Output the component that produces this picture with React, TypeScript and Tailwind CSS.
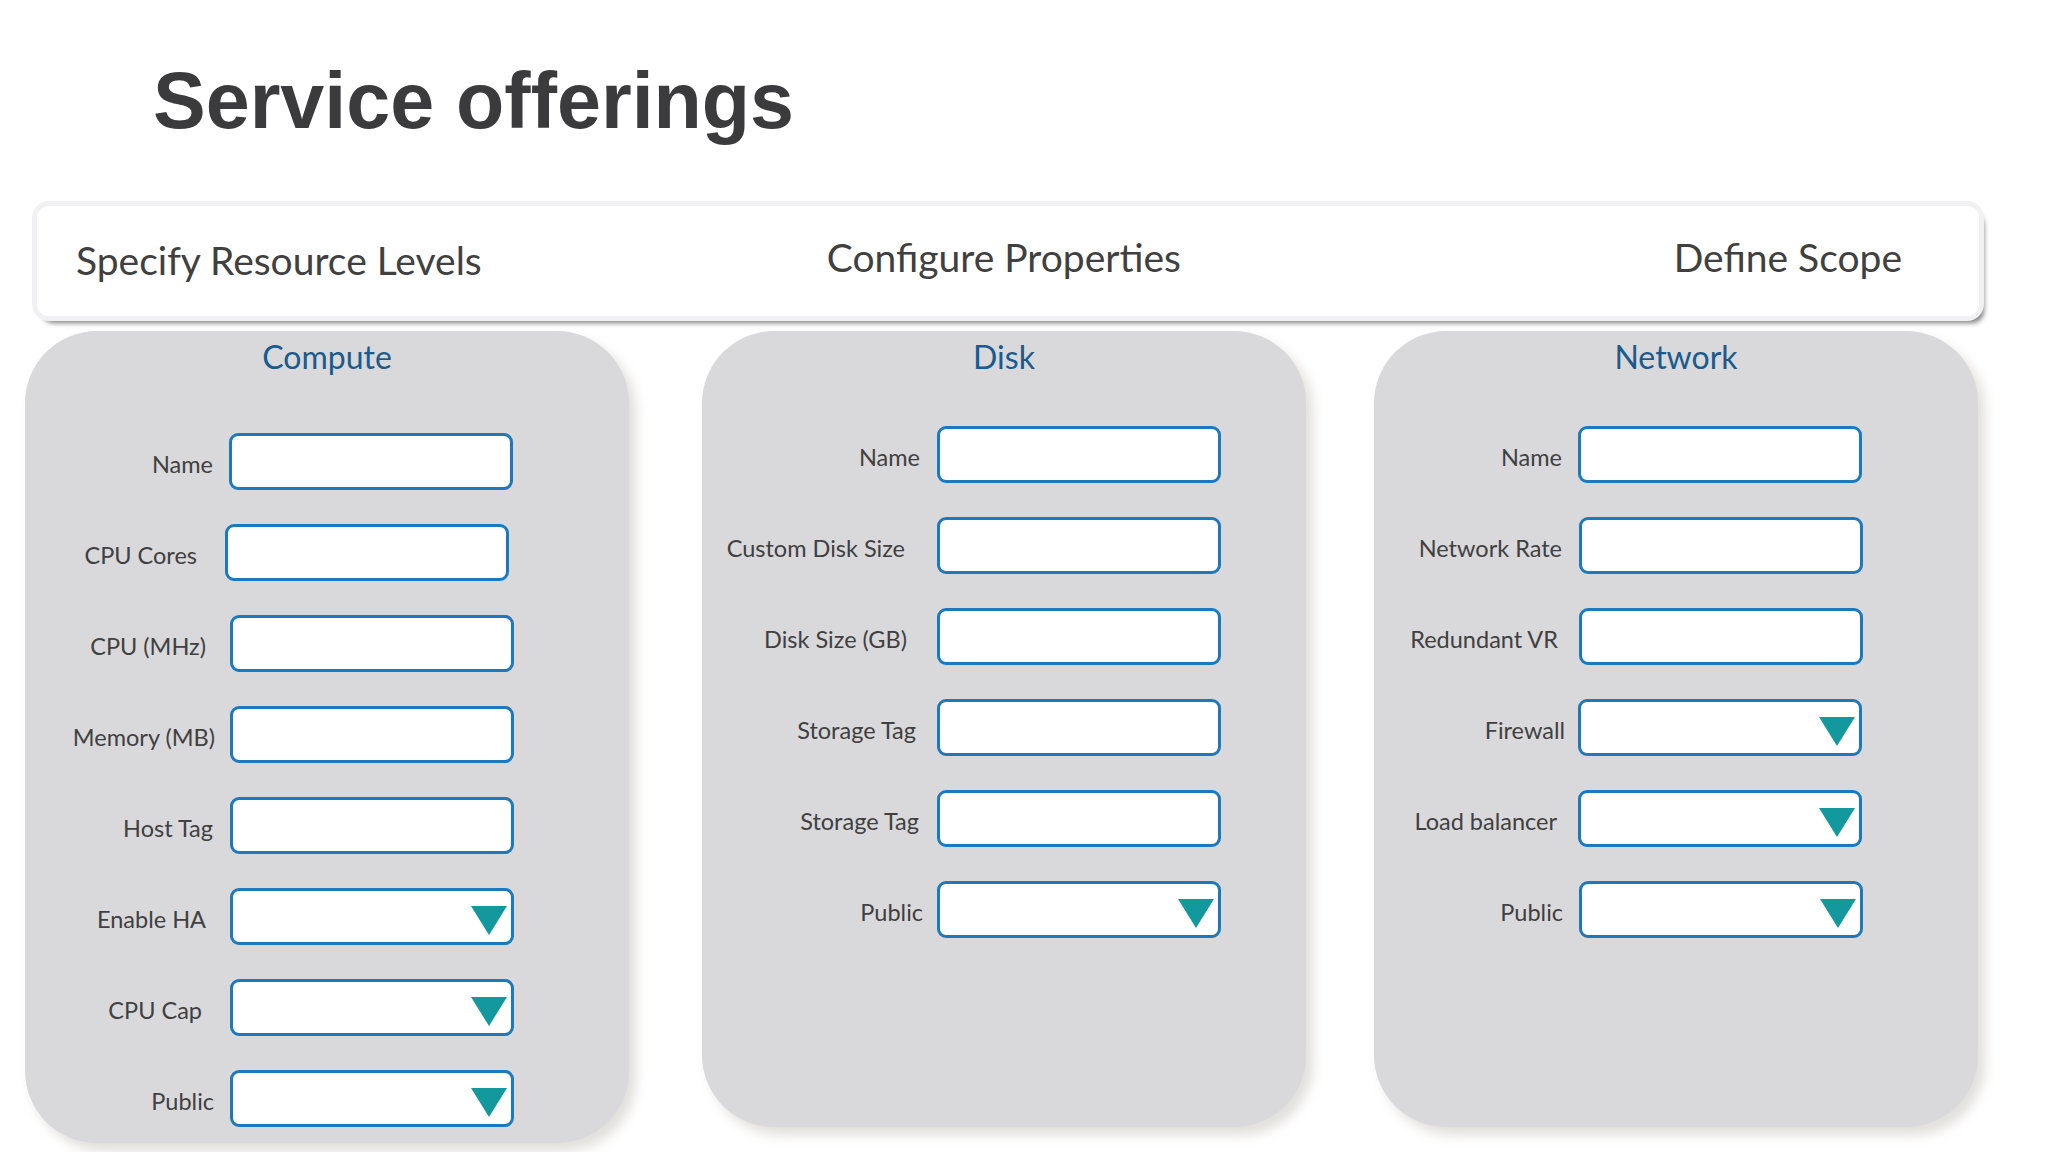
import React from "react"

type Row = { label: string; select?: boolean; lw: string; gap: string }

const calibri = { fontFamily: "Lato, 'Open Sans', sans-serif" }

const compute: Row[] = [
  { label: "Name", lw: "w-[188px]", gap: "ml-[16px]" },
  { label: "CPU Cores", lw: "w-[172px]", gap: "ml-[28px]" },
  { label: "CPU (MHz)", lw: "w-[181px]", gap: "ml-[24px]" },
  { label: "Memory (MB)", lw: "w-[190px]", gap: "ml-[15px]" },
  { label: "Host Tag", lw: "w-[188px]", gap: "ml-[17px]" },
  { label: "Enable HA", select: true, lw: "w-[181px]", gap: "ml-[24px]" },
  { label: "CPU Cap", select: true, lw: "w-[177px]", gap: "ml-[28px]" },
  { label: "Public", select: true, lw: "w-[189px]", gap: "ml-[16px]" },
]

const disk: Row[] = [
  { label: "Name", lw: "w-[218px]", gap: "ml-[17px]" },
  { label: "Custom Disk Size", lw: "w-[203px]", gap: "ml-[32px]" },
  { label: "Disk Size (GB)", lw: "w-[205px]", gap: "ml-[30px]" },
  { label: "Storage Tag", lw: "w-[214px]", gap: "ml-[21px]" },
  { label: "Storage Tag", lw: "w-[217px]", gap: "ml-[18px]" },
  { label: "Public", select: true, lw: "w-[221px]", gap: "ml-[14px]" },
]

const network: Row[] = [
  { label: "Name", lw: "w-[188px]", gap: "ml-[16px]" },
  { label: "Network Rate", lw: "w-[188px]", gap: "ml-[17px]" },
  { label: "Redundant VR", lw: "w-[184px]", gap: "ml-[21px]" },
  { label: "Firewall", select: true, lw: "w-[191px]", gap: "ml-[13px]" },
  { label: "Load balancer", select: true, lw: "w-[183px]", gap: "ml-[21px]" },
  { label: "Public", select: true, lw: "w-[189px]", gap: "ml-[16px]" },
]

function Field({ row }: { row: Row }) {
  return (
    <div className="flex items-center h-[57px]">
      <span className={`${row.lw} pt-[6px] text-right text-[23.5px] text-[#404040] whitespace-nowrap`} style={calibri}>
        {row.label}
      </span>
      <div className={`${row.gap} relative w-[284px] h-[57px] bg-white border-[3px] border-[#1c79bd] rounded-[9px]`}>
        {row.select && (
          <svg className="absolute right-[4px] top-[15px]" width="36" height="29" viewBox="0 0 36 29">
            <polygon points="0,0 36,0 18,29" fill="#12989d" />
          </svg>
        )}
      </div>
    </div>
  )
}

function Panel({ title, rows, className, rowsTop }: { title: string; rows: Row[]; className: string; rowsTop: string }) {
  return (
    <div className={`${className} w-[604px] bg-[#d9d8db] rounded-[72px] shadow-[7px_8px_12px_rgba(120,110,90,0.22)] pt-[10px]`}>
      <h2 className="text-center text-[32px] leading-none text-[#195b8c]" style={calibri}>
        {title}
      </h2>
      <div className={`${rowsTop} flex flex-col gap-[34px]`}>
        {rows.map((r, i) => (
          <Field key={i} row={r} />
        ))}
      </div>
    </div>
  )
}

export default function App() {
  return (
    <div className="w-[2048px] h-[1152px] bg-white overflow-hidden flex flex-col">
      <h1
        className="ml-[153px] mt-[61px] text-[79px] leading-none font-bold text-[#3b3b3d]"
        style={{ fontFamily: "'Liberation Sans', Arial, sans-serif" }}
      >
        Service offerings
      </h1>

      <div
        className="ml-[37px] mt-[66px] w-[1942px] h-[110px] bg-white rounded-[12px] ring-[5px] ring-[#f1f1f3] shadow-[5px_7px_5px_rgba(0,0,0,0.5)] flex items-center text-[39px] text-[#404040]"
        style={calibri}
      >
        <span className="ml-[39px] mb-[2px]">Specify Resource Levels</span>
        <span className="ml-[345px] mb-[8px]">Configure Properties</span>
        <span className="ml-auto mr-[77px] mb-[8px]">Define Scope</span>
      </div>

      <div className="mt-[15px] flex items-start">
        <Panel title="Compute" rows={compute} className="ml-[25px] h-[812px]" rowsTop="mt-[60px]" />
        <Panel title="Disk" rows={disk} className="ml-[73px] h-[796px]" rowsTop="mt-[53px]" />
        <Panel title="Network" rows={network} className="ml-[68px] h-[796px]" rowsTop="mt-[53px]" />
      </div>
    </div>
  )
}
